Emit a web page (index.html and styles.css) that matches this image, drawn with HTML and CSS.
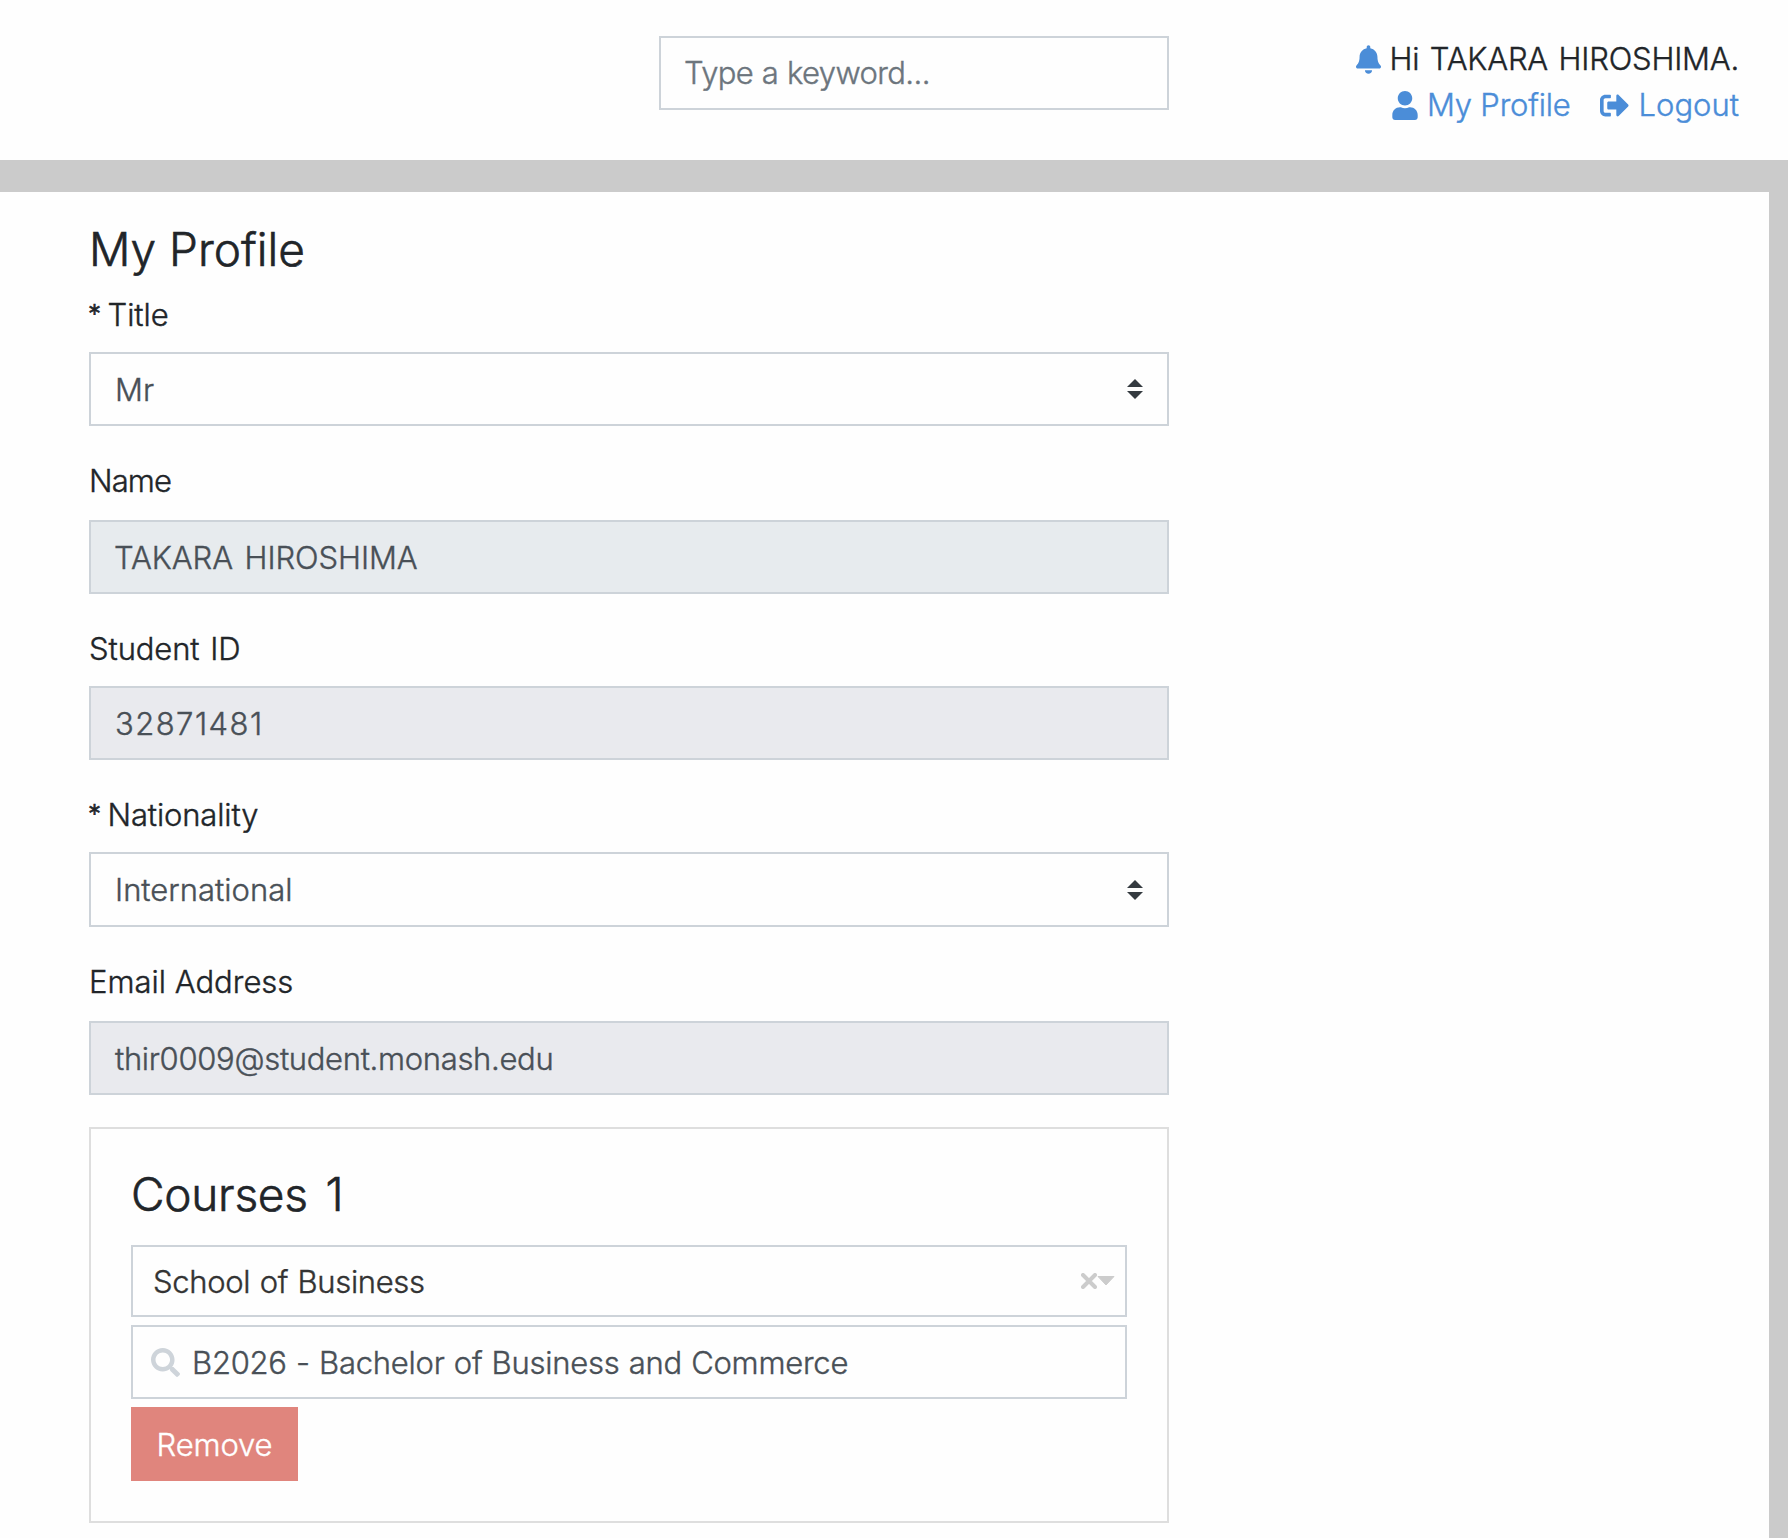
FILE: index.html
```
<!DOCTYPE html>
<html lang="en">
<head>
<meta charset="utf-8">
<title>My Profile</title>
<link rel="stylesheet" href="styles.css">
</head>
<body>
<header class="topbar">
  <div class="search"><span class="t-search">Type a keyword...</span></div>
  <div class="user">
    <div class="user-row">
      <svg class="icon bell" viewBox="0 0 448 512"><path d="M224 512c35.32 0 63.97-28.65 63.97-64H160.03c0 35.35 28.65 64 63.97 64zm215.39-149.71c-19.32-20.76-55.47-51.99-55.47-154.29 0-77.7-54.48-139.9-127.94-155.16V32c0-17.67-14.32-32-31.98-32s-31.98 14.33-31.98 32v20.84C118.56 68.1 64.08 130.3 64.08 208c0 102.3-36.15 133.53-55.47 154.29-6 6.45-8.66 14.16-8.61 21.71.11 16.4 12.98 32 32.1 32h383.8c19.12 0 32-15.6 32.1-32 .05-7.55-2.61-15.27-8.61-21.71z"/></svg>
      <span class="t-hi">Hi TAKARA HIROSHIMA.</span>
    </div>
    <div class="user-row">
      <a class="link profile">
        <svg class="icon person" viewBox="0 0 448 512"><path d="M224 256c70.7 0 128-57.3 128-128S294.7 0 224 0 96 57.3 96 128s57.3 128 128 128zm89.6 32h-16.7c-22.2 10.2-46.9 16-72.9 16s-50.6-5.8-72.9-16h-16.7C60.2 288 0 348.2 0 422.4V464c0 26.5 21.5 48 48 48h352c26.5 0 48-21.5 48-48v-41.6c0-74.2-60.2-134.4-134.4-134.4z"/></svg>
        <span class="t-profile">My Profile</span>
      </a>
      <a class="link logout">
        <svg class="icon exit" viewBox="0 0 512 512"><path d="M497 273L329 441c-15 15-41 4.500-41-17v-96H152c-13.300 0-24-10.700-24-24v-96c0-13.300 10.700-24 24-24h136V88c0-21.400 25.900-32 41-17l168 168c9.300 9.400 9.300 24.600 0 34zM192 436v-40c0-6.600-5.400-12-12-12H96c-17.700 0-32-14.300-32-32V160c0-17.700 14.300-32 32-32h84c6.600 0 12-5.400 12-12V76c0-6.600-5.400-12-12-12H96c-53 0-96 43-96 96v192c0 53 43 96 96 96h84c6.600 0 12-5.400 12-12z"/></svg>
        <span class="t-logout">Logout</span>
      </a>
    </div>
  </div>
</header>
<main class="page">
  <div class="form">
    <h1 class="heading t-heading">My Profile</h1>
    <div class="group">
      <div class="label t-title"><span class="star">*</span> Title</div>
      <div class="control"><span>Mr</span>
        <svg class="sorter" viewBox="0 0 16 20"><path d="M8 0l8 8H0zM0 12h16l-8 8z"/></svg></div>
    </div>
    <div class="group loose">
      <div class="label t-name">Name</div>
      <div class="control readonly cool"><span class="t-fullname">TAKARA HIROSHIMA</span></div>
    </div>
    <div class="group">
      <div class="label t-id">Student ID</div>
      <div class="control readonly"><span class="t-digits">32871481</span></div>
    </div>
    <div class="group tall">
      <div class="label t-nationality"><span class="star">*</span> Nationality</div>
      <div class="control"><span class="t-international">International</span>
        <svg class="sorter" viewBox="0 0 16 20"><path d="M8 0l8 8H0zM0 12h16l-8 8z"/></svg></div>
    </div>
    <div class="group loose">
      <div class="label">Email Address</div>
      <div class="control readonly"><span class="t-address">thir0009@student.monash.edu</span></div>
    </div>
    <section class="card">
      <h2 class="heading t-courses">Courses 1</h2>
      <div class="control school"><span class="t-school">School of Business</span>
        <span class="indicators">
          <svg class="cross" viewBox="0 0 16 16"><path d="M2 2l12 12M14 2L2 14"/></svg>
          <svg class="caret" viewBox="0 0 18 10"><path d="M1 .500h16L9 9z"/></svg>
        </span></div>
      <div class="control course">
        <svg class="lens" viewBox="0 0 512 512"><path d="M505 442.700L405.300 343c-4.500-4.500-10.600-7-17-7H372c27.600-35.300 44-79.700 44-128C416 93.100 322.900 0 208 0S0 93.100 0 208s93.100 208 208 208c48.300 0 92.700-16.400 128-44v16.300c0 6.400 2.500 12.500 7 17l99.700 99.700c9.400 9.400 24.600 9.400 33.900 0l28.300-28.300c9.400-9.400 9.400-24.600.1-34zM208 336c-70.700 0-128-57.200-128-128 0-70.700 57.200-128 128-128 70.700 0 128 57.200 128 128 0 70.700-57.200 128-128 128z"/></svg>
        <span class="t-course">B2026 - Bachelor of Business and Commerce</span></div>
      <button class="remove" type="button">Remove</button>
    </section>
  </div>
</main>
</body>
</html>
```
FILE: styles.css
```
* { box-sizing: border-box; }

body {
  margin: 0;
  height: 1538px;
  overflow: hidden;
  display: flex;
  flex-direction: column;
  background: #cbcbcb;
  color: #212529;
  font: 300 31px/45px Inter, "Noto Sans", sans-serif;
  -webkit-text-stroke: 0.4px currentColor;
  white-space: nowrap;
}

.topbar {
  flex: none;
  height: 160px;
  padding: 36px 49px 0 659px;
  display: flex;
  justify-content: space-between;
  align-items: flex-start;
  background: #fefefe;
}

.search {
  width: 510px;
  height: 74px;
  padding: 0 24px 1px 23px;
  display: flex;
  align-items: center;
  border: 2px solid #cdd3d9;
  color: #6c757d;
}

.user { line-height: 46px; }
.user-row { display: flex; justify-content: flex-end; }
.link { display: flex; color: #4b8dd8; }
.logout { margin-left: 29px; }

.icon { flex: none; height: 29px; margin-top: 9px; fill: #4b8dd8; }
.bell { width: 25px; margin-right: 9px; }
.person { width: 26px; margin-right: 9px; }
.exit { width: 29px; margin-right: 10px; }

.page {
  flex: 1;
  margin: 32px 19px 0 0;
  padding: 30px 0 0 89px;
  background: #fefefe;
}

.form { width: 1080px; }

.heading { margin: 0 0 15px; font-size: 46px; font-weight: 300; line-height: 55px; -webkit-text-stroke-width: 0.6px; }

.group { margin-bottom: 32px; }
.label { margin-bottom: 15px; }
.loose .label { margin-bottom: 17px; }
.tall .control { height: 75px; }
.star { display: inline-block; width: 11px; margin-left: -1px; font-size: 26px; line-height: 1; vertical-align: 3px; -webkit-text-stroke-width: 0.7px; }

.control {
  height: 74px;
  padding: 0 24px;
  display: flex;
  align-items: center;
  justify-content: space-between;
  border: 2px solid #cdd3d9;
  color: #495057;
}
.readonly { background: #e9eaee; }
.cool { background: #e7ebee; }

.sorter { width: 16px; height: 20px; fill: #343a40; }

.card {
  height: 396px;
  padding: 38px 40px 40px;
  border: 2px solid #dedede;
}
.card .heading { margin-bottom: 23px; }

.school { height: 72px; margin-bottom: 8px; padding: 0 10px 0 20px; color: #333; }
.indicators { display: flex; align-items: center; }
.cross { width: 16px; height: 16px; fill: none; stroke: #ccc; stroke-width: 4; stroke-linecap: round; }
.caret { width: 18px; height: 10px; fill: #ccc; stroke: #ccc; stroke-linejoin: round; }

.course { margin-bottom: 8px; padding-left: 18px; justify-content: flex-start; }
.lens { width: 29px; height: 29px; margin-right: 12px; fill: #ced4da; }

.remove {
  display: block;
  width: 167px;
  height: 74px;
  padding: 0;
  border: 0;
  background: #e0857d;
  color: #fff;
  font: inherit;
  letter-spacing: -0.14px;
}

.t-search { letter-spacing: -0.6px; word-spacing: 0.5px; }
.t-hi { letter-spacing: -0.2px; word-spacing: 2px; }
.t-profile { letter-spacing: -0.2px; }
.t-courses { letter-spacing: -0.25px; word-spacing: 5px; }
.t-title { letter-spacing: -0.1px; }
.t-name { letter-spacing: -0.85px; }
.t-fullname { margin-left: -1px; letter-spacing: -0.08px; word-spacing: 3px; }
.t-id { letter-spacing: -0.1px; word-spacing: 2px; }
.t-digits { letter-spacing: 1.45px; }
.t-nationality { letter-spacing: -0.15px; }
.t-address { letter-spacing: -0.32px; }
.t-school { letter-spacing: -0.32px; word-spacing: 1px; }
.t-course { letter-spacing: -0.25px; word-spacing: 0.8px; }
```
